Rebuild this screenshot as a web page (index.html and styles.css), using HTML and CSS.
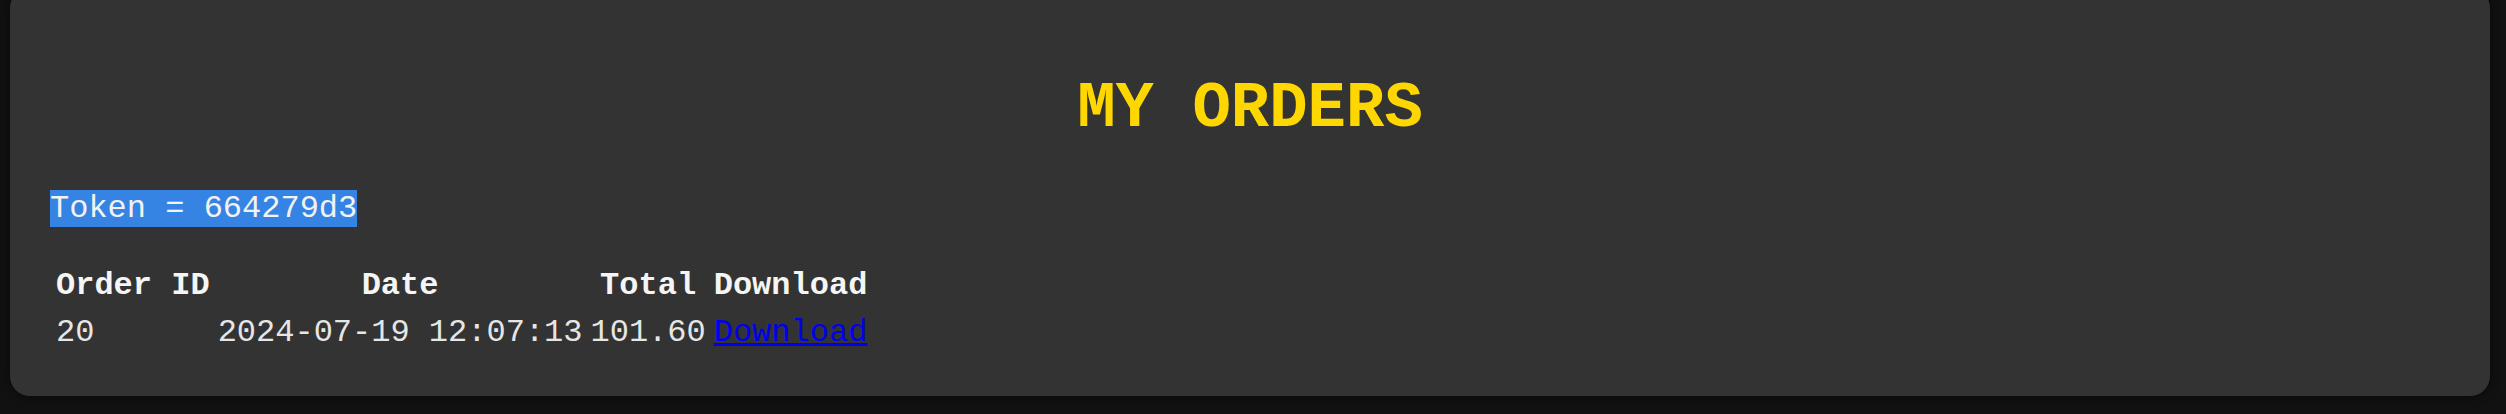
FILE: index.html
```html
<!DOCTYPE html>
<html lang="en">
<head>
<meta charset="utf-8">
<title>My Orders</title>
<link rel="stylesheet" href="styles.css">
</head>
<body>
<main class="card">
  <h1 class="title">MY ORDERS</h1>
  <p class="token"><span class="token-mark">Token = 664279d3</span></p>
  <table class="orders">
    <thead>
      <tr><th>Order ID</th><th>Date</th><th>Total</th><th>Download</th></tr>
    </thead>
    <tbody>
      <tr><td>20</td><td>2024-07-19 12:07:13</td><td>101.60</td><td><a class="dl" href="#">Download</a></td></tr>
    </tbody>
  </table>
</main>
</body>
</html>
```
FILE: styles.css
```css
html, body {
  margin: 0;
  padding: 0;
  background: #111111;
  height: 100%;
  overflow: hidden;
}
body {
  font-family: "Liberation Mono", "DejaVu Sans Mono", monospace;
  font-size: 32px;
  line-height: 1.2;
  color: #e6e6e6;
}
.card {
  margin: -12px 16px 0 10px;
  padding: 40px 40px 39px;
  background: #333333;
  border-radius: 20px;
  box-shadow: 0 0 10px rgba(0, 0, 0, 0.6);
}
.title {
  margin: 43px 0 42px;
  text-align: center;
  font-size: 64px;
  font-weight: bold;
  color: #ffd700;
}
.token {
  margin: 0 0 34px;
}
.token-mark {
  background: #3584e4;
  color: #f2f2f2;
}
.orders {
  margin-left: 1px;
  border-collapse: separate;
  border-spacing: 2px;
}
.orders th,
.orders td {
  padding: 3px;
}
.orders th {
  font-weight: bold;
  color: #f5f5f5;
  text-align: center;
}
.orders td {
  text-align: left;
}
.dl {
  color: #0000ee;
  text-decoration: underline;
}
```
